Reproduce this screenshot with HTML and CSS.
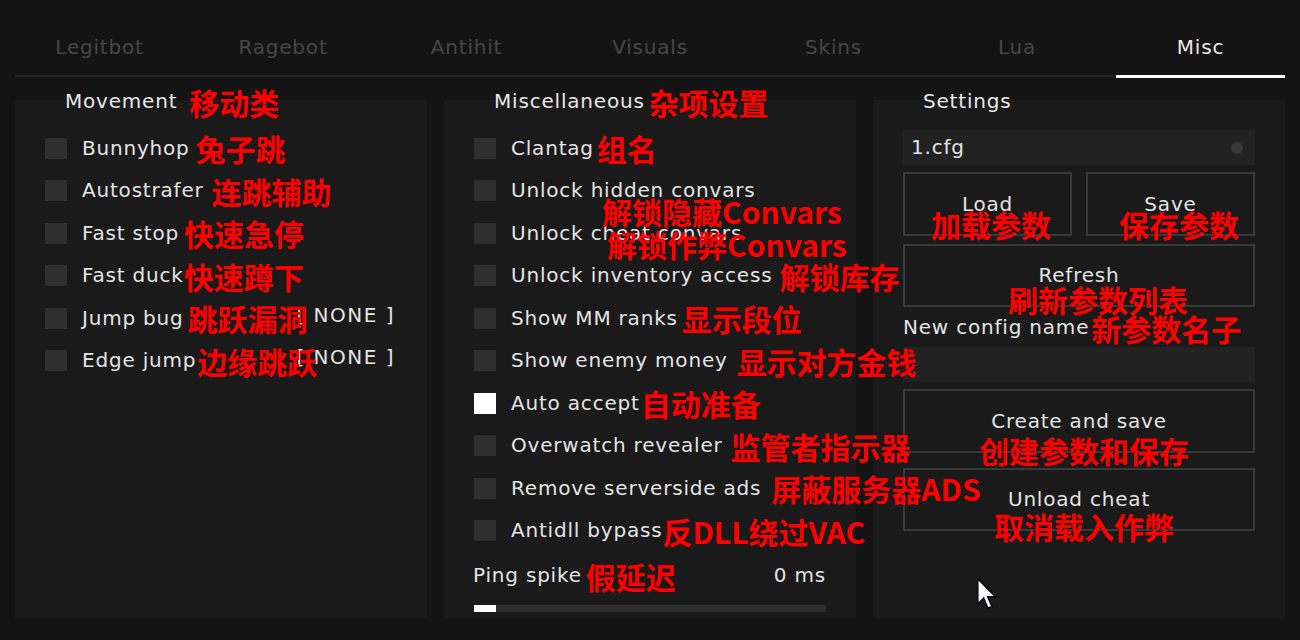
FILE: index.html
```html
<!DOCTYPE html>
<html lang="en">
<head>
<meta charset="utf-8">
<title>Misc</title>
<link rel="stylesheet" href="styles.css">
</head>
<body>
<div class="app">
  <nav class="tabs">
    <div class="tab">Legitbot</div>
    <div class="tab">Ragebot</div>
    <div class="tab">Antihit</div>
    <div class="tab">Visuals</div>
    <div class="tab">Skins</div>
    <div class="tab">Lua</div>
    <div class="tab active">Misc</div>
  </nav>

  <main class="panels">
    <section class="panel">
      <h2 class="panel-title">Movement<span class="note gap-12">移动类</span></h2>
      <div class="rows">
        <div class="row"><span class="box"></span><span class="label">Bunnyhop</span><span class="note gap-6">兔子跳</span></div>
        <div class="row"><span class="box"></span><span class="label">Autostrafer</span><span class="note gap-8">连跳辅助</span></div>
        <div class="row"><span class="box"></span><span class="label">Fast stop</span><span class="note gap-5">快速急停</span></div>
        <div class="row"><span class="box"></span><span class="label">Fast duck</span><span class="note gap-0">快速蹲下</span></div>
        <div class="row"><span class="box"></span><span class="label">Jump bug</span><span class="note gap-4 overlap">跳跃漏洞</span><span class="bind">[ NONE ]</span></div>
        <div class="row"><span class="box"></span><span class="label">Edge jump</span><span class="note gap-1 overlap">边缘跳跃</span><span class="bind">[ NONE ]</span></div>
      </div>
    </section>

    <section class="panel">
      <h2 class="panel-title">Miscellaneous<span class="note gap-4">杂项设置</span></h2>
      <div class="rows">
        <div class="row"><span class="box"></span><span class="label">Clantag</span><span class="note gap-3">组名</span></div>
        <div class="row overlay-host"><span class="box"></span><span class="label">Unlock hidden convars</span><span class="note float note-hidden">解锁隐藏Convars</span></div>
        <div class="row overlay-host"><span class="box"></span><span class="label">Unlock cheat convars</span><span class="note float note-cheat">解锁作弊Convars</span></div>
        <div class="row"><span class="box"></span><span class="label">Unlock inventory access</span><span class="note gap-7">解锁库存</span></div>
        <div class="row"><span class="box"></span><span class="label">Show MM ranks</span><span class="note gap-4">显示段位</span></div>
        <div class="row"><span class="box"></span><span class="label">Show enemy money</span><span class="note gap-9">显示对方金钱</span></div>
        <div class="row"><span class="box checked"></span><span class="label">Auto accept</span><span class="note gap-1">自动准备</span></div>
        <div class="row"><span class="box"></span><span class="label">Overwatch revealer</span><span class="note gap-8">监管者指示器</span></div>
        <div class="row"><span class="box"></span><span class="label">Remove serverside ads</span><span class="note gap-10">屏蔽服务器ADS</span></div>
        <div class="row"><span class="box"></span><span class="label">Antidll bypass</span><span class="note gap-0">反DLL绕过VAC</span></div>
      </div>
      <div class="slider-head">
        <span class="slider-label"><span class="label">Ping spike</span><span class="note gap-4">假延迟</span></span>
        <span class="label">0 ms</span>
      </div>
      <div class="slider"><div class="slider-fill" style="width: 22px"></div></div>
    </section>

    <section class="panel">
      <h2 class="panel-title">Settings</h2>
      <div class="settings">
        <div class="select"><span class="label">1.cfg</span><span class="dot"></span></div>
        <div class="btn-pair">
          <div class="btn btn-tall">Load<span class="note float note-load">加载参数</span></div>
          <div class="btn btn-tall">Save<span class="note float note-save">保存参数</span></div>
        </div>
        <div class="btn btn-refresh">Refresh<span class="note float note-refresh">刷新参数列表</span></div>
        <div class="field-label"><span class="label">New config name</span><span class="note gap-2">新参数名子</span></div>
        <div class="input"></div>
        <div class="btn btn-create">Create and save<span class="note float note-create">创建参数和保存</span></div>
        <div class="btn btn-unload">Unload cheat<span class="note float note-unload">取消载入作弊</span></div>
      </div>
    </section>
  </main>

  <svg class="cursor" width="22" height="34" viewBox="0 0 14 22" aria-hidden="true">
    <path d="M1 1 L1 17.5 L4.8 13.8 L7.6 20.2 L10.2 19.1 L7.5 12.9 L12.6 12.9 Z" fill="#ffffff" stroke="#0a0a14" stroke-width="1.1" stroke-linejoin="miter"/>
  </svg>
</div>
</body>
</html>
```

FILE: styles.css
```css
* {
  box-sizing: border-box;
}

html, body {
  margin: 0;
  padding: 0;
  background: #141414;
}

body {
  width: 1300px;
  height: 640px;
  overflow: hidden;
  font-family: "DejaVu Sans", Verdana, sans-serif;
  font-size: 20px;
  letter-spacing: 0.8px;
  color: #e4e4e4;
}

.app {
  position: relative;
  width: 1300px;
  height: 640px;
}

/* ---------- tabs ---------- */
.tabs {
  display: flex;
  justify-content: space-between;
  margin: 0 15px;
  border-bottom: 2px solid #242424;
}

.tab {
  width: 169px;
  padding: 36px 0 16px;
  line-height: 23px;
  text-align: center;
  color: #474747;
}

.tab.active {
  color: #e8e8e8;
  box-shadow: 0 3px 0 #ffffff;
}

/* ---------- panels ---------- */
.panels {
  display: flex;
  gap: 17px;
  margin: 23px 15px 0;
}

.panel {
  flex: none;
  width: 412px;
  height: 518px;
  background: #1a1a1a;
}

.panel-title {
  display: flex;
  align-items: center;
  height: 23px;
  margin: -10px 0 0;
  padding-left: 50px;
  font-size: 20px;
  font-weight: normal;
  line-height: 23px;
  color: #e8e8e8;
}

.rows {
  padding-top: 14px;
}

.row {
  display: flex;
  align-items: center;
  height: 42.5px;
  padding: 0 30px;
}

.overlay-host {
  position: relative;
}

.box {
  flex: none;
  width: 22px;
  height: 21px;
  margin-right: 15px;
  background: #2f2f2f;
}

.box.checked {
  background: #ffffff;
}

.label {
  line-height: 23px;
  white-space: nowrap;
}

.bind {
  flex: none;
  margin-left: auto;
  margin-right: 2px;
  margin-bottom: 6px;
  line-height: 23px;
  letter-spacing: 1.5px;
  white-space: nowrap;
}

/* ---------- red annotations ---------- */
.note {
  position: relative;
  z-index: 2;
  flex: none;
  font-family: "Noto Sans CJK SC", "Noto Sans", sans-serif;
  font-size: 30px;
  font-weight: 700;
  line-height: 30px;
  letter-spacing: 0;
  color: #ff0000;
  white-space: nowrap;
}

.note.overlap {
  margin-right: -40px;
}

.gap-0 { margin-left: 0; }
.gap-1 { margin-left: 1px; }
.gap-2 { margin-left: 2px; }
.gap-3 { margin-left: 3px; }
.gap-4 { margin-left: 4px; }
.gap-5 { margin-left: 5px; }
.gap-6 { margin-left: 6px; }
.gap-7 { margin-left: 7px; }
.gap-8 { margin-left: 8px; }
.gap-9 { margin-left: 9px; }
.gap-10 { margin-left: 10px; }
.gap-12 { margin-left: 12px; }

.note.float {
  position: absolute;
}

.note-hidden { left: 158px; top: 26px; }
.note-cheat  { left: 163px; top: 17px; }

/* ---------- slider ---------- */
.slider-head {
  display: flex;
  align-items: center;
  justify-content: space-between;
  height: 23px;
  margin-top: 12px;
  padding: 0 30px 0 29px;
}

.slider-label {
  display: flex;
  align-items: center;
}

.slider {
  height: 7px;
  margin: 18px 30px 0;
  background: #2f2f2f;
}

.slider-fill {
  height: 100%;
  background: #ffffff;
}

/* ---------- settings ---------- */
.settings {
  display: flex;
  flex-direction: column;
  padding: 17px 30px 0;
}

.select {
  display: flex;
  align-items: center;
  justify-content: space-between;
  height: 35px;
  padding: 0 12px 0 8px;
  background: #222222;
}

.dot {
  width: 12px;
  height: 12px;
  border-radius: 50%;
  background: #383838;
}

.btn-pair {
  display: flex;
  gap: 14px;
  margin-top: 7px;
}

.btn {
  position: relative;
  display: flex;
  align-items: center;
  justify-content: center;
  border: 2px solid #393939;
  line-height: 23px;
  white-space: nowrap;
}

.btn-tall {
  width: 169px;
  height: 64px;
}

.btn-refresh {
  height: 63px;
  margin-top: 8px;
}

.field-label {
  display: flex;
  align-items: center;
  height: 23px;
  margin-top: 9px;
}

.input {
  height: 35px;
  margin-top: 8px;
  background: #222222;
}

.btn-create {
  height: 64px;
  margin-top: 7px;
}

.btn-unload {
  height: 63px;
  margin-top: 15px;
}

.note-load    { left: 26px;  top: 35px; }
.note-save    { left: 31px;  top: 35px; }
.note-refresh { left: 103px; top: 38px; }
.note-create  { left: 74px;  top: 44px; }
.note-unload  { left: 89px;  top: 41px; }

/* ---------- mouse pointer ---------- */
.cursor {
  position: absolute;
  left: 976px;
  top: 577px;
}
```
